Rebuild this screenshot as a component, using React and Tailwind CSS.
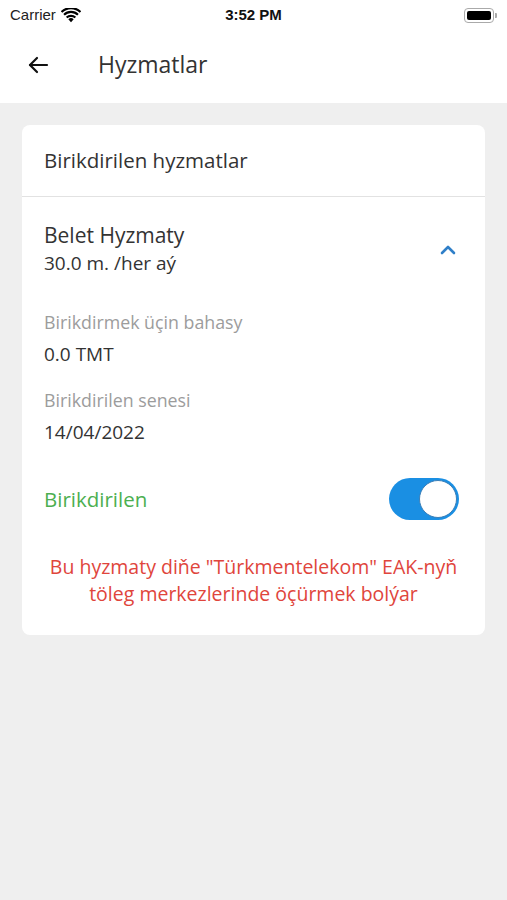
import React from "react";

function Wifi() {
  return (
    <svg width="20" height="15" viewBox="0 0 20 15" className="ml-[5px]">
      <path d="M10 14.2 L7.3 11.3 A4 4 0 0 1 12.7 11.3 Z" fill="#000" />
      <path d="M4.9 8.7 A7.4 7.4 0 0 1 15.1 8.7 L13.6 10.3 A5.3 5.3 0 0 0 6.4 10.3 Z" fill="#000" />
      <path d="M2.3 5.9 A11 11 0 0 1 17.7 5.9 L16.2 7.5 A8.9 8.9 0 0 0 3.8 7.5 Z" fill="#000" />
      <path d="M-0.2 3.2 A14.6 14.6 0 0 1 20.2 3.2 L18.7 4.8 A12.5 12.5 0 0 0 1.3 4.8 Z" fill="#000" />
    </svg>
  );
}

export default function App() {
  const font = { fontFamily: "'Open Sans', 'Noto Sans', sans-serif" };
  return (
    <div className="w-[507px] h-[900px] bg-[#efefef] flex flex-col" style={font}>
      <div className="bg-white flex flex-col">
        <div className="h-[30px] flex items-center justify-between px-[10px] relative">
          <div className="flex items-center text-[15px] text-[#222]" style={{ fontFamily: "'Liberation Sans', Arial, sans-serif" }}>
            Carrier
            <Wifi />
          </div>
          <div className="absolute left-0 right-0 flex justify-center text-[15px] font-bold text-[#111] pointer-events-none" style={{ fontFamily: "'Liberation Sans', Arial, sans-serif" }}>
            3:52 PM
          </div>
          <div className="flex items-center mr-[0px]">
            <div className="w-[30px] h-[15px] rounded-[4px] border border-[#aaa] p-[2px]">
              <div className="w-full h-full rounded-[2px] bg-black" />
            </div>
            <div className="w-[2px] h-[5px] bg-[#aaa] rounded-r-[1px] ml-[1px]" />
          </div>
        </div>
        <div className="h-[73px] flex items-center">
          <div className="w-[98px] flex items-center pl-[26px] -mt-[3px]">
            <svg width="24" height="24" viewBox="0 0 24 24" fill="none" stroke="#111" strokeWidth="2.2" strokeLinecap="round" strokeLinejoin="round">
              <path d="M21 12H4" />
              <path d="M11 5l-7 7 7 7" />
            </svg>
          </div>
          <div className="text-[23px] text-[#333] -mt-[5px]">Hyzmatlar</div>
        </div>
      </div>

      <div className="px-[22px] pt-[22px]">
        <div className="bg-white rounded-[8px] flex flex-col">
          <div className="h-[72px] flex items-center px-[22px] text-[20.5px] text-[#333] border-b border-[#e2e2e2]">
            Birikdirilen hyzmatlar
          </div>
          <div className="flex items-center justify-between px-[22px] pt-[23px]">
            <div className="flex flex-col">
              <div className="text-[21px] text-[#333] leading-[30px]">Belet Hyzmaty</div>
              <div className="text-[19px] text-[#333] leading-[26px]">30.0 m. /her aý</div>
            </div>
            <svg width="18" height="12" viewBox="0 0 18 12" fill="none" stroke="#2f7fc8" strokeWidth="2.6" strokeLinecap="round" strokeLinejoin="round" className="mr-[6px] mt-[4px]">
              <path d="M3 9l6-6 6 6" />
            </svg>
          </div>
          <div className="flex flex-col px-[22px] pt-[33px]">
            <div className="text-[17.8px] text-[#9c9c9c] leading-[26px]">Birikdirmek üçin bahasy</div>
            <div className="text-[19px] text-[#333] leading-[26px] mt-[6px]">0.0 TMT</div>
            <div className="text-[17.8px] text-[#9c9c9c] leading-[26px] mt-[20px]">Birikdirilen senesi</div>
            <div className="text-[19px] text-[#333] leading-[26px] mt-[6px]">14/04/2022</div>
          </div>
          <div className="flex items-center justify-between px-[22px] mt-[33px]">
            <div className="text-[20.5px] text-[#4caf50]">Birikdirilen</div>
            <div className="w-[70px] h-[42px] rounded-full bg-[#1a8fe3] flex items-center justify-end pr-[2px] mr-[4px]">
              <div className="w-[38px] h-[38px] rounded-full bg-white border border-[#3b7fb8]" />
            </div>
          </div>
          <div className="text-center text-[19.5px] text-[#e0453c] leading-[27px] px-[10px] pt-[33px] pb-[28px]">
            Bu hyzmaty diňe "Türkmentelekom" EAK-nyň<br />töleg merkezlerinde öçürmek bolýar
          </div>
        </div>
      </div>
    </div>
  );
}
